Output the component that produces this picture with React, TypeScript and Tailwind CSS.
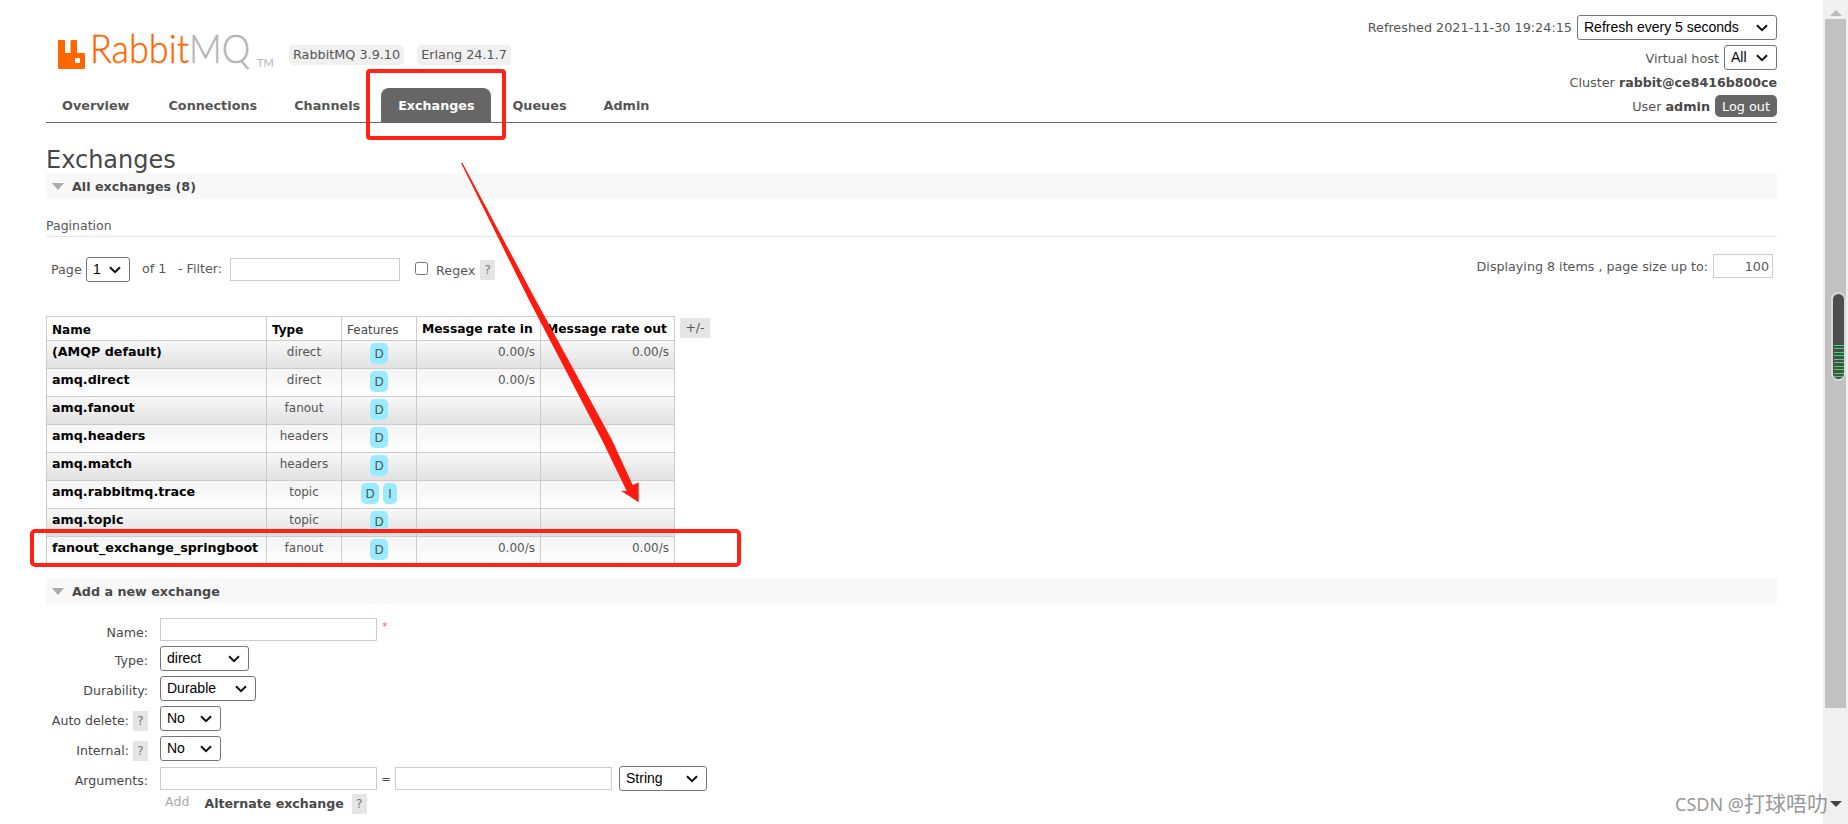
const exchanges = [
  { name: "(AMQP default)", type: "direct", features: ["D"], rateIn: "0.00/s", rateOut: "0.00/s" },
  { name: "amq.direct", type: "direct", features: ["D"], rateIn: "0.00/s", rateOut: "" },
  { name: "amq.fanout", type: "fanout", features: ["D"], rateIn: "", rateOut: "" },
  { name: "amq.headers", type: "headers", features: ["D"], rateIn: "", rateOut: "" },
  { name: "amq.match", type: "headers", features: ["D"], rateIn: "", rateOut: "" },
  { name: "amq.rabbitmq.trace", type: "topic", features: ["D", "I"], rateIn: "", rateOut: "" },
  { name: "amq.topic", type: "topic", features: ["D"], rateIn: "", rateOut: "" },
  { name: "fanout_exchange_springboot", type: "fanout", features: ["D"], rateIn: "0.00/s", rateOut: "0.00/s" },
];

const inputClass = "h-[23px] border border-[#ccc] bg-white";

function Select({ label, width }: { label: string; width: string }) {
  return (
    <div className={`relative shrink-0 h-[25px] ${width}`}>
      <select
        className="appearance-none w-full h-full border border-[#767676] rounded-[3px] bg-white text-[14px] text-black pl-[6px] font-['Liberation_Sans',sans-serif]"
        defaultValue={label}
      >
        <option value={label}>{label}</option>
      </select>
      <svg className="absolute right-[9px] top-[9px] pointer-events-none" width="12" height="8" viewBox="0 0 12 8">
        <path d="M1 1.200l5 5 5-5" fill="none" stroke="#111" strokeWidth="2" />
      </svg>
    </div>
  );
}

function Help() {
  return (
    <span className="inline-flex items-center justify-center w-[15px] h-[20px] bg-[#e5e5e5] text-[#777] text-[12px]">?</span>
  );
}

function SectionBar({ title }: { title: string }) {
  return (
    <div className="flex items-center h-[26px] bg-[#f8f8f8] pl-[6px] gap-[8px]">
      <span className="w-0 h-0 border-x-[6px] border-x-transparent border-t-[7px] border-t-[#aaa]" />
      <span className="font-bold text-[12.700px] pt-[1px] text-[#484848]">{title}</span>
    </div>
  );
}

function Logo() {
  return (
    <div className="flex items-end w-[231px]">
      <svg width="27" height="29" viewBox="0 0 27 29" className="mr-[5px] mb-[1px]">
        <path
          fill="#ff6600"
          fillRule="evenodd"
          d="M0 1a1 1 0 0 1 1-1h5a1 1 0 0 1 1 1v12h5.500V1a1 1 0 0 1 1-1h4.500a1 1 0 0 1 1 1v12h7a1 1 0 0 1 1 1v14a1 1 0 0 1-1 1H1a1 1 0 0 1-1-1V1zM17 18v5h5v-5h-5z"
        />
      </svg>
      <span className="block w-[163px] whitespace-nowrap origin-left scale-x-[0.9]">
        <span className="font-['Lato',sans-serif] font-light text-[40px] leading-[38px] [-webkit-text-stroke:0.4px_#ff6600] text-[#ff6600]">Rabbit</span>
        <span className="font-['Lato',sans-serif] font-light text-[40px] leading-[38px] [-webkit-text-stroke:0.4px_#b4b4b4] text-[#b4b4b4]">MQ</span>
      </span>
      <span className="font-['Lato',sans-serif] text-[11px] leading-[14px] text-[#b4b4b4] ml-[4px]">TM</span>
    </div>
  );
}

function Header() {
  const tabs = ["Overview", "Connections", "Channels", "Exchanges", "Queues", "Admin"];
  return (
    <header className="flex justify-between h-[123px] border-b border-[#666]">
      <div className="flex flex-col justify-between pt-[29px]">
        <div className="flex items-start pl-[12px]">
          <Logo />
          <div className="flex gap-[13px] mt-[16px]">
            <span className="bg-[#f0f0f0] rounded-[5px] h-[20px] leading-[20px] px-[4px] text-[12.800px] text-[#555]">RabbitMQ 3.9.10</span>
            <span className="bg-[#f0f0f0] rounded-[5px] h-[20px] leading-[20px] px-[4px] text-[12.800px] text-[#555]">Erlang 24.1.7</span>
          </div>
        </div>
        <nav className="flex">
          {tabs.map((tab) =>
            tab === "Exchanges" ? (
              <span key={tab} className="h-[34px] leading-[35px] px-[17px] mr-[5px] rounded-t-[8px] bg-[#666] text-white font-bold text-[12.700px]">
                {tab}
              </span>
            ) : (
              <span
                key={tab}
                className={
                  tab === "Overview"
                    ? "h-[34px] leading-[35px] px-[16px] mr-[7px] text-[#555] font-bold text-[12.800px]"
                    : "h-[34px] leading-[35px] px-[16px] mr-[5px] text-[#555] font-bold text-[12.800px]"
                }
              >
                {tab}
              </span>
            ),
          )}
        </nav>
      </div>
      <div className="flex flex-col items-end pt-[15px] text-[12.800px] text-[#555]">
        <div className="flex items-center gap-[5px] h-[25px]">
          <span>Refreshed 2021-11-30 19:24:15</span>
          <Select label="Refresh every 5 seconds" width="w-[200px]" />
        </div>
        <div className="flex items-center gap-[5px] h-[25px] mt-[5px]">
          <span className="pt-[2px]">Virtual host</span>
          <Select label="All" width="w-[53px]" />
        </div>
        <div className="h-[20px] leading-[20px] mt-[3px]">
          Cluster <b className="text-[#484848] text-[12.600px]">rabbit@ce8416b800ce</b>
        </div>
        <div className="flex items-center gap-[5px] h-[22px] mt-[2px]">
          <span className="pt-[1px]">
            User <b className="text-[#484848]">admin</b>
          </span>
          <span className="h-[22px] leading-[23px] px-[7px] bg-[#666] rounded-[5px] text-white">Log out</span>
        </div>
      </div>
    </header>
  );
}

function Pagination() {
  return (
    <>
      <div className="h-[38px] flex items-end border-b border-[#e5e5e5] text-[12.500px] text-[#555]">Pagination</div>
      <div className="flex items-center justify-between h-[28px] mt-[18px] pr-[4px] text-[12.700px] text-[#555]">
        <div className="flex items-center pl-[5px]">
          <span className="w-[35px] mt-[2px]">Page</span>
          <Select label="1" width="w-[44px]" />
          <span className="ml-[12px] w-[36px]">of 1</span>
          <span className="-mt-[1px]">- Filter:</span>
          <input className={`${inputClass} w-[170px] ml-[8px]`} />
          <input type="checkbox" className="w-[13px] h-[13px] ml-[15px] -mt-[2px]" />
          <span className="ml-[8px] mt-[3px]">Regex</span>
          <span className="ml-[5px] mt-[2px] flex">
            <Help />
          </span>
        </div>
        <div className="flex items-center gap-[5px] -mt-[6px]">
          <span className="pt-[2px]">Displaying 8 items , page size up to:</span>
          <input defaultValue="100" className={`${inputClass} w-[60px] h-[24px] text-right pr-[3px] text-[12.700px] text-[#555]`} />
        </div>
      </div>
    </>
  );
}

function ExchangeTable() {
  return (
    <div className="flex items-start mt-[33px]">
      <table className="table-fixed border-collapse w-[628px] text-[12px] text-[#555]">
        <colgroup>
          <col className="w-[220px]" />
          <col className="w-[75px]" />
          <col className="w-[75px]" />
          <col className="w-[124px]" />
          <col className="w-[134px]" />
        </colgroup>
        <thead>
          <tr className="h-[24px] text-black">
            <th className="border border-[#ccc] text-left font-bold px-[5px] pt-[2px]">Name</th>
            <th className="border border-[#ccc] text-left font-bold px-[5px] pt-[2px]">Type</th>
            <th className="border border-[#ccc] text-left font-normal text-[#484848] px-[5px] pt-[2px]">Features</th>
            <th className="border border-[#ccc] text-left font-bold px-[5px] pt-[2px] whitespace-nowrap text-[12.300px]">Message rate in</th>
            <th className="border border-[#ccc] text-left font-bold px-[5px] pt-[2px] whitespace-nowrap text-[12.300px]">Message rate out</th>
          </tr>
        </thead>
        <tbody>
          {exchanges.map((row, i) => (
            <tr
              key={row.name}
              className={i % 2 === 0 ? "h-[28px] bg-gradient-to-b from-[#f8f8f8] to-[#e0e0e0]" : "h-[28px] bg-gradient-to-b from-[#f4f4f4] to-[#ffffff]"}
            >
              <td className="border border-[#ccc] align-top pt-[1px] px-[5px] font-bold text-[12.700px] text-black whitespace-nowrap">{row.name}</td>
              <td className="border border-[#ccc] align-top pt-[2px] text-center">{row.type}</td>
              <td className="border border-[#ccc] align-top pt-[2px] text-center">
                <div className="flex justify-center gap-[4px]">
                  {row.features.map((f) => (
                    <span key={f} className={f === "D" ? "w-[18px] h-[21px] leading-[22px] rounded-[5px] bg-[#99ebff]" : "w-[14px] h-[21px] leading-[22px] rounded-[5px] bg-[#99ebff]"}>
                      {f}
                    </span>
                  ))}
                </div>
              </td>
              <td className="border border-[#ccc] align-top pt-[2px] text-right pr-[5px]">{row.rateIn}</td>
              <td className="border border-[#ccc] align-top pt-[2px] text-right pr-[5px]">{row.rateOut}</td>
            </tr>
          ))}
        </tbody>
      </table>
      <span className="ml-[5px] mt-[2px] flex items-center justify-center w-[30px] h-[20px] bg-[#e5e5e5] text-[12.500px] text-[#555]">+/-</span>
    </div>
  );
}

function FormRow({ label, help, children }: { label: string; help?: boolean; children: React.ReactNode }) {
  return (
    <div className="flex items-start h-[30px]">
      <div className="flex justify-end items-center gap-[4px] w-[102px] mr-[12px] h-[30px] text-[12.600px] text-[#484848] whitespace-nowrap">
        <span className="mt-[1px]">{label}</span>
        {help && <Help />}
      </div>
      {children}
    </div>
  );
}

function AddExchange() {
  return (
    <div className="mt-[13px]">
      <SectionBar title="Add a new exchange" />
      <div className="mt-[13px]">
        <div className="flex items-start h-[29px]">
          <div className="w-[102px] mr-[12px] h-[30px] flex items-center justify-end text-[12.600px] text-[#484848]">
            <span className="mt-[2px]">Name:</span>
          </div>
          <input className={`${inputClass} w-[217px] mt-[1px]`} />
          <span className="ml-[5px] mt-[2px] text-[11px] text-[#f66]">*</span>
        </div>
        <FormRow label="Type:">
          <Select label="direct" width="w-[89px]" />
        </FormRow>
        <FormRow label="Durability:">
          <Select label="Durable" width="w-[96px]" />
        </FormRow>
        <FormRow label="Auto delete:" help>
          <Select label="No" width="w-[61px]" />
        </FormRow>
        <FormRow label="Internal:" help>
          <Select label="No" width="w-[61px]" />
        </FormRow>
        <FormRow label="Arguments:">
          <input className={`${inputClass} w-[217px] mt-[1px]`} />
          <span className="w-[18px] text-center text-[12px] text-[#555] mt-[4px]">=</span>
          <input className={`${inputClass} w-[217px] mt-[1px]`} />
          <div className="ml-[7px]">
            <Select label="String" width="w-[88px]" />
          </div>
        </FormRow>
        <div className="flex items-center h-[16px] ml-[119px] text-[12.600px]">
          <span className="text-[#aaa] -mt-[4px]">Add</span>
          <span className="ml-[15px] font-bold text-[#484848]">Alternate exchange</span>
          <span className="ml-[8px] flex">
            <Help />
          </span>
        </div>
      </div>
    </div>
  );
}

function Scrollbar() {
  const ticks = [0, 1, 2, 3, 4, 5, 6, 7, 8, 9];
  return (
    <aside className="relative flex flex-col items-center w-[25px] bg-[#f0f0f0]">
      <span className="mt-[10px] w-0 h-0 border-x-[6px] border-x-transparent border-b-[6px] border-b-[#bbb]" />
      <div className="mt-[3px] w-[21px] h-[689px] bg-[#c1c1c1]" />
      <span className="mt-[93px] w-0 h-0 border-x-[6px] border-x-transparent border-t-[6px] border-t-[#444]" />
      <div className="absolute top-[292px] left-[8px] w-[15px] h-[89px] rounded-full bg-[#4d4d4d] border-2 border-[#d8d8d8] flex flex-col items-center justify-end gap-[2.500px] pb-[2px]">
        {ticks.map((t) => (
          <span key={t} className="w-[10px] h-[1px] bg-[#33e066]" />
        ))}
      </div>
    </aside>
  );
}

function Annotations() {
  return (
    <>
      <div className="absolute left-[366px] top-[69px] w-[140px] h-[71px] border-[4px] border-[#ff2215] rounded-[4px]" />
      <div className="absolute left-[30px] top-[529px] w-[711px] h-[38px] border-[4px] border-[#ff2215] rounded-[5px]" />
      <svg className="absolute left-0 top-0 pointer-events-none" width="1848" height="824">
        <polygon
          fill="#ff1a10"
          points="462.500,163 535.700,300 612,440 632.700,485 638.700,482.500 638.700,502.300 621,490.700 626.700,491 602,440 529,300 461,163"
        />
      </svg>
      <div className="absolute left-[1675px] top-[790px] text-[18px] leading-[26px] text-[#999] whitespace-nowrap font-['Noto_Sans','Noto_Sans_CJK_SC',sans-serif]">
        CSDN @<span className="text-[21px]">打球唔叻</span>
      </div>
    </>
  );
}

export default function App() {
  return (
    <div className="relative flex h-[824px] w-[1848px] overflow-hidden bg-white font-['DejaVu_Sans',sans-serif]">
      <main className="flex-1 pl-[46px] pr-[46px]">
        <Header />
        <h1 className="h-[50px] flex items-center pt-[24px] text-[24px] font-normal text-[#484848]">Exchanges</h1>
        <SectionBar title="All exchanges (8)" />
        <Pagination />
        <ExchangeTable />
        <AddExchange />
      </main>
      <Scrollbar />
      <Annotations />
    </div>
  );
}
